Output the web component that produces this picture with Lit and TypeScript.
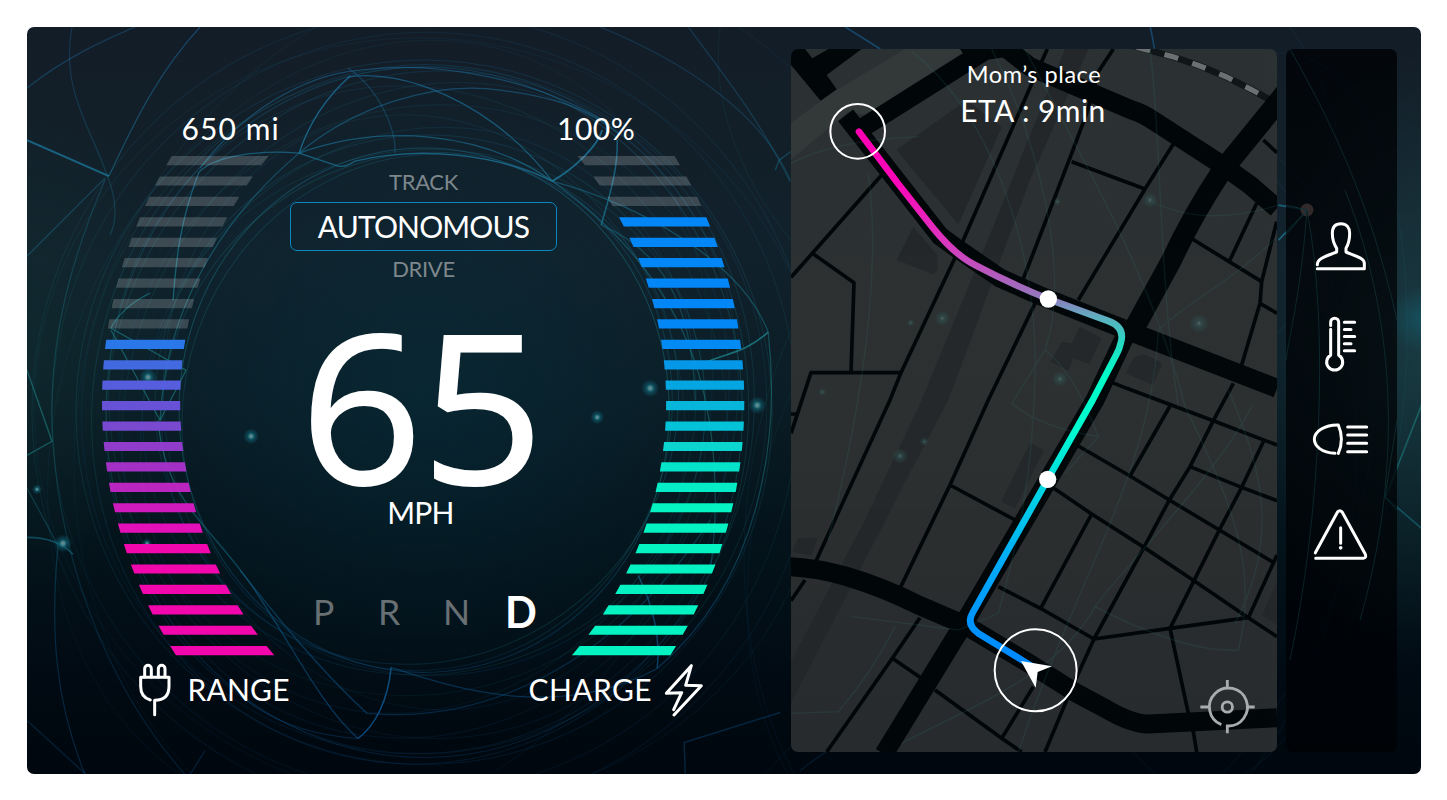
import { LitElement, html, svg, css } from "lit";
import { customElement, property } from "lit/decorators.js";

const TRACK = "rgba(255,255,255,.19)";
const PINK = "#f907b2";
const BLUE = "#0389fd";
const MINT = "#05fac8";

const RANGE_COLORS = [
  ...Array(9).fill(TRACK),
  "#2b7af0", "#446be6", "#5960e4", "#6a53dc", "#7d4ad6", "#953dd0", "#a832cb", "#c026c4", "#d61bc2", "#ea0fbd",
  ...Array(6).fill(PINK),
];
const CHARGE_COLORS = [
  ...Array(3).fill(TRACK),
  ...Array(6).fill(BLUE),
  "#038efa", "#059cf0", "#04aae8", "#07bbe0", "#04c8de", "#0bdcd4", "#05ead0", "#05f4cb",
  ...Array(8).fill(MINT),
];

/* Horizontal offset of a circle's left edge at a vertical distance from its centre. */
const bow = (r: number, dy: number) => r - Math.sqrt(r * r - dy * dy);

@customElement("arc-gauge")
class ArcGauge extends LitElement {
  @property({ attribute: false }) colors: string[] = [];
  @property({ type: Boolean }) mirrored = false;

  static styles = css`
    :host { display: block; height: 500px; }
    svg { display: block; }
  `;

  render() {
    const pitch = 20.42;
    const bars = this.colors.map((fill, i) => {
      const top = i * pitch;
      const bottom = top + 9.2;
      const a = top - 246.3;
      const b = bottom - 246.3;
      const pts = [
        [bow(470, a), top],
        [78.2 + bow(387, a), top],
        [78.2 + bow(387, b), bottom],
        [bow(470, b), bottom],
      ].map(([x, y]) => `${(this.mirrored ? 185.3 - x : x).toFixed(2)},${y.toFixed(2)}`);
      return svg`<polygon points=${pts.join(" ")} fill=${fill} fill-opacity=".97"/>`;
    });
    return html`<svg width="186" height="500" viewBox="0 0 186 500">${bars}</svg>`;
  }
}

@customElement("energy-web")
class EnergyWeb extends LitElement {
  static styles = css`
    :host { display: block; }
    svg { display: block; width: 100%; height: 100%; }
  `;

  render() {
    const rings = [
      [424, 410, 245, 262, 0, 0.4], [427, 412, 243, 260, 20, 0.25], [420, 408, 250, 264, 50, 0.26],
      [424, 412, 262, 282, 80, 0.16], [430, 405, 275, 270, 10, 0.2], [418, 420, 270, 300, 30, 0.14],
      [424, 400, 290, 310, 60, 0.13], [424, 412, 318, 345, 0, 0.3], [430, 412, 322, 343, 18, 0.2],
      [420, 414, 328, 350, 8, 0.22], [424, 410, 340, 346, 40, 0.14], [424, 412, 348, 352, 0, 0.2],
      [430, 410, 300, 335, 28, 0.15], [418, 412, 305, 330, -24, 0.15], [424, 412, 372, 380, 10, 0.13],
      [424, 412, 392, 400, 0, 0.15], [430, 420, 398, 380, 20, 0.1], [424, 412, 258, 300, -15, 0.13],
      [380, 430, 320, 400, 22, 0.1], [500, 430, 420, 470, 20, 0.09], [1050, 500, 300, 420, 12, 0.12],
      [1060, 500, 290, 410, 24, 0.1], [1240, 420, 160, 370, 8, 0.1], [1030, 120, 330, 250, 30, 0.11],
    ];
    const strands: [string, number, number][] = [
      ["M27,140 L109,176", 0.75, 2],
      ["M109,176 C135,120 160,70 200,27", 0.5, 1.2],
      ["M27,88 C65,58 100,42 135,27", 0.4, 1.2],
      ["M27,256 L105,178", 0.4, 1.2],
      ["M72,27 C60,90 92,130 107,175 C117,200 117,220 110,235", 0.3, 1.2],
      ["M105,180 C75,250 50,330 52,420 C56,560 110,690 185,774", 0.32, 1.2],
      ["M299,153 Q314,108 350,76", 0.8, 1.3],
      ["M348,77 C400,68 490,100 552,181", 0.65, 1.3],
      ["M299,153 C350,110 430,80 500,90 C560,98 590,110 620,135", 0.5, 1.3],
      ["M299,153 C260,150 215,155 199,172 C180,220 176,260 173,300", 0.65, 1.3],
      ["M299,153 L338,166 C345,167 350,164 355,161 C420,145 500,155 552,181", 0.7, 1.3],
      ["M299,153 C380,124 480,130 552,181", 0.6, 1.2],
      ["M299,153 C220,220 165,310 160,420", 0.5, 1.2],
      ["M200,168 C240,115 300,75 360,70 C440,60 540,80 610,125", 0.5, 1.2],
      ["M348,68 C380,90 396,130 395,153", 0.35, 1.3],
      ["M552,181 C575,168 598,145 602,130", 0.8, 1.8],
      ["M617,140 C618,170 608,200 601,225", 0.7, 1.5],
      ["M552,181 C640,205 740,260 768,332", 0.5, 1.2],
      ["M552,181 C620,230 670,290 694,360 C715,420 720,500 710,570", 0.5, 1.2],
      ["M768,332 C745,352 730,352 708,361", 0.8, 1.6],
      ["M768,332 C780,440 760,580 657,668", 0.5, 1.2],
      ["M601,225 C660,250 692,300 695,400", 0.4, 1.2],
      ["M638,575 C655,610 660,640 657,668", 0.7, 1.4],
      ["M391,667 C388,700 375,725 358,738", 0.9, 1.5],
      ["M358,738 C320,705 290,640 248,580 C205,520 165,500 158,420", 0.6, 1.3],
      ["M367,713 C320,670 280,620 240,570", 0.55, 1.3],
      ["M391,667 C460,690 560,720 657,668", 0.5, 1.2],
      ["M358,738 C310,735 270,720 240,695", 0.4, 1.2],
      ["M367,713 C480,723 610,670 710,520", 0.4, 1.2],
      ["M150,293 C130,302 115,318 111,328 L186,370 L160,420 L111,330", 0.65, 1.2],
      ["M27,455 L52,441 L27,370", 0.6, 1.4],
      ["M27,537 C40,537 60,540 73,554", 0.6, 1.6],
      ["M27,488 L58,545 C50,630 55,700 85,774", 0.4, 1.2],
      ["M27,720 L86,774 M190,774 L205,750", 0.35, 1.2],
      ["M800,770 C900,690 940,730 1060,700", 0.25, 1.2],
      ["M685,774 L684,742 L780,712", 0.4, 1.4],
      ["M775,170 L779,160 C830,120 890,110 960,100", 0.4, 1.4],
      ["M600,27 C680,60 760,110 790,180", 0.3, 1.2],
      ["M688,27 C720,70 760,120 790,182", 0.35, 1.2],
      ["M845,27 L880,49 M1150,27 L1160,80", 0.5, 1.6],
      ["M1278,205 L1307,210 L1278,240", 0.7, 1.6],
      ["M1421,405 L1385,497 L1421,528", 0.6, 1.6],
    ];
    return html`
      <svg viewBox="27 27 1394 747" preserveAspectRatio="none">
        <defs>
          <linearGradient id="w" x1="0" y1="27" x2="0" y2="774" gradientUnits="userSpaceOnUse">
            <stop offset="0" stop-color="#1b6ca6"/>
            <stop offset=".35" stop-color="#1b8292"/>
            <stop offset=".55" stop-color="#1c7f7c"/>
            <stop offset=".8" stop-color="#0c5686"/>
            <stop offset="1" stop-color="#0a4e8a"/>
          </linearGradient>
          <radialGradient id="n">
            <stop offset="0" stop-color="#7f8c90"/>
            <stop offset=".22" stop-color="#3a8087"/>
            <stop offset=".45" stop-color="#127084" stop-opacity=".5"/>
            <stop offset="1" stop-color="#127084" stop-opacity="0"/>
          </radialGradient>
        </defs>
        <g fill="none" stroke="url(#w)">
          ${rings.map(([x, y, rx, ry, r, o]) => svg`<ellipse cx=${x} cy=${y} rx=${rx} ry=${ry} transform=${`rotate(${r} ${x} ${y})`} opacity=${o}/>`)}
          ${strands.map(([d, o, w]) => svg`<path d=${d} opacity=${o} stroke-width=${w}/>`)}
        </g>
        ${[[650, 388, 9], [757, 405, 9], [251, 436, 8], [597, 417, 7], [63, 543, 9], [37, 489, 5], [147, 543, 5], [148, 377, 9]]
          .map(([x, y, r]) => svg`<circle cx=${x} cy=${y} r=${r} fill="url(#n)"/>`)}
      </svg>`;
  }
}

@customElement("route-map")
class RouteMap extends LitElement {
  static styles = css`
    :host { display: grid; border-radius: 7px; overflow: hidden; font-family: Lato, sans-serif; color: #fff; }
    svg { grid-area: 1 / 1; display: block; width: 486px; height: 703px; }
    .caption {
      grid-area: 1 / 1; z-index: 1; justify-self: center; align-self: start;
      display: flex; flex-direction: column; align-items: center;
      padding-top: 11px; text-align: center; white-space: pre;
    }
    .place { font-size: 23.5px; line-height: 28px; letter-spacing: .55px; }
    .eta { font-size: 30px; line-height: 36px; margin-top: 4px; letter-spacing: .45px; padding-right: 2px; }
  `;

  render() {
    return html`
      <svg viewBox="18 27 1458 2109" preserveAspectRatio="none">
        <defs>
          <linearGradient id="land" x1="0" y1="0" x2="0" y2="1">
            <stop offset="0" stop-color="#2c3134"/><stop offset=".5" stop-color="#2d3030"/><stop offset="1" stop-color="#282c2f"/>
          </linearGradient>
          <linearGradient id="route" x1="0" y1="275" x2="0" y2="1870" gradientUnits="userSpaceOnUse">
            <stop offset="0" stop-color="#ff00b4"/>
            <stop offset=".1" stop-color="#fb08b8"/>
            <stop offset=".2" stop-color="#df32be"/>
            <stop offset=".26" stop-color="#bb55bd"/>
            <stop offset=".31" stop-color="#9377bc"/>
            <stop offset=".35" stop-color="#5db0c0"/>
            <stop offset=".4" stop-color="#24dcc2"/>
            <stop offset=".46" stop-color="#00fcc8"/>
            <stop offset=".56" stop-color="#00fad0"/>
            <stop offset=".68" stop-color="#00d2e4"/>
            <stop offset=".8" stop-color="#00aef6"/>
            <stop offset=".92" stop-color="#0094ff"/>
            <stop offset="1" stop-color="#0088ff"/>
          </linearGradient>
          <radialGradient id="glow">
            <stop offset="0" stop-color="#566867"/><stop offset=".25" stop-color="#355655" stop-opacity=".6"/>
            <stop offset="1" stop-color="#255052" stop-opacity="0"/>
          </radialGradient>
        </defs>
        <rect x="18" y="27" width="1458" height="2109" fill="url(#land)"/>
        <polygon fill="#34383a" points="18,250 110,180 155,150 360,27 550,27 240,225 190,215 130,265 18,360"/>
        <g fill="#24282a">
          <polygon points="840,27 910,27 735,420 490,1080 395,1260 18,1990 18,1865 240,1440 410,1080 600,620"/>
          <polygon points="335,330 545,180 650,262 520,553"/>
          <polygon points="385,560 457,645 457,690 445,703 335,660"/>
          <polygon points="885,860 950,895 913,972 865,955 850,992 797,965 830,905 860,910"/>
          <path d="M1023,1000 L1040,962 Q1060,938 1085,945 L1125,965 L1130,975 L1103,1035 Z"/>
          <polygon points="735,1210 777,1230 690,1405 648,1385"/>
          <polygon points="38,1495 98,1493 80,1547 22,1535"/>
          <polygon points="1476,1625 1432,1725 1476,1755"/>
        </g>
        <path d="M1040,16 L1075,26 L1160,49 L1243,77 L1323,110 L1402,150 L1476,192" fill="none" stroke="#111719" stroke-width="20"/>
        <path d="M1054,21 L1075,27 L1160,49 L1243,77 L1323,110 L1402,150 L1476,192" fill="none" stroke="#6c7072" stroke-width="16" stroke-dasharray="43 44.3"/>
        <g fill="none" stroke="#02070a" stroke-linejoin="round">
          <g stroke-width="11">
            <path d="M290,405 L82,640 L18,712 M82,640 L207,728 L198,998 M18,1180 L78,998 H348 M18,1122 H35"/>
            <path d="M787,27 L745,120 L535,600 L348,998 L315,1080 L92,1565"/>
            <path d="M985,27 L940,95 L905,220 L860,340 L735,665 L715,715 M750,790 L610,1080 L495,1335 L345,1645 M495,1335 L690,1440"/>
            <path d="M860,365 L1080,447 M1165,312 L1080,447 L880,780 M1435,300 L1476,338 M1415,490 L1335,660 M1222,597 L1430,725"/>
            <path d="M1475,545 L1430,725 L1425,790 L1370,975 M1425,790 L1476,820 M975,1025 L1025,1045 L1285,1142 L1476,1215"/>
            <path d="M1345,1030 L1285,1142 L1215,1280 L1153,1380 L1077,1522 L927,1797 L860,1945 L780,2136 M1155,1098 L1035,1308"/>
            <path d="M875,1215 L1035,1308 L1153,1380 L1303,1470 L1465,1567 M1215,1280 L1370,1342 L1476,1382"/>
            <path d="M1435,1205 L1370,1342 L1303,1470 L1227,1622 L1155,1765 L1210,2020 L1225,2075 L1235,2136"/>
            <path d="M800,1340 L920,1422 L1077,1522 L1227,1622 L1390,1733 L1476,1790 M920,1422 L767,1705"/>
            <path d="M640,1640 L770,1707 L927,1797 L1155,1765 L1390,1733 L1476,1545 M60,1620 L18,1682"/>
            <path d="M405,1733 L322,1855 L125,2136 M322,1855 L405,1912 M450,1950 L650,2095 L710,2136 M745,1940 L650,2095"/>
          </g>
          <g stroke-width="57">
            <path d="M235,262 L600,32 L660,22 L735,80 L1040,210 Q1070,218 1110,245 L1311,375 L1395,435 L1476,505"/>
            <path d="M1500,160 L1311,392 Q1220,530 1160,660 L1045,870" stroke-width="62"/>
            <path d="M182,226 L465,588 L520,628 L645,714 L760,765 L1050,880 L1476,1045"/>
            <path d="M1022,885 L930,1080 L540,1745 L297,2142"/>
            <path d="M15,1580 Q100,1585 180,1608 Q290,1640 400,1695 L540,1755 L740,1875 L870,1957 L960,2005 Q1040,2052 1090,2052 L1476,2033"/>
          </g>
        </g>
        <path fill="#02070a" d="M18,27 H60 L82,55 L130,27 H230 L125,105 L155,148 L107,182 L18,75 Z M525,27 H705 L740,50 L618,52 L560,80 Z"/>
        <g fill="none" stroke="#2e7d7d" stroke-width="4" opacity=".16">
          <path d="M380,35 C600,200 760,600 750,1000 C745,1300 700,1500 640,1720 L520,1770 L200,1730"/>
          <path d="M720,27 C860,300 1100,700 1200,1100 C1350,1400 1420,1600 1360,1830 Q1200,1840 930,1700"/>
          <path d="M1090,480 Q1250,565 1476,497 M1476,590 C1350,720 1200,790 1120,870 M1095,27 C1130,300 1120,700 1180,1100"/>
          <path d="M18,370 Q150,300 400,290 M250,400 C290,700 230,1100 130,1500 M620,27 C760,300 860,700 780,930 L680,1090 Q760,1160 940,1190 L840,1300"/>
          <path d="M18,2020 L160,2015 Q260,1900 330,1760 M1400,1100 C1300,1300 1000,1600 930,1700 C820,1900 600,1980 350,2110 M780,930 Q870,1000 940,1190"/>
          <path d="M1330,1050 C1440,1300 1480,1500 1350,1750 M1120,870 C1100,1300 880,1600 700,2136"/>
        </g>
        ${[[472, 835, 24], [345, 1248, 24], [1095, 480, 24], [1242, 850, 30], [825, 1017, 24], [817, 485, 12], [377, 848, 12], [112, 1056, 12], [418, 1205, 14]]
          .map(([x, y, r]) => svg`<circle cx=${x} cy=${y} r=${r} fill="url(#glow)"/>`)}
        <path d="M222,275 L340,432 L445,565 Q510,645 570,675 Q670,728 790,777 L970,843 Q1022,862 1007,910 Q1003,928 995,942 L923,1080 L788,1318 L563,1718 Q542,1752 580,1780 L740,1878"
          fill="none" stroke="url(#route)" stroke-width="20" stroke-linecap="round" stroke-linejoin="round"/>
        <g fill="#fff">
          <circle cx="790" cy="777" r="26"/><circle cx="788" cy="1318" r="26"/>
          <polygon points="708,1863 801,1879 758,1896 752,1943"/>
        </g>
        <g fill="none" stroke="#fff" stroke-width="6">
          <circle cx="218" cy="274" r="82"/><circle cx="752" cy="1891" r="123"/>
        </g>
        <g fill="none" stroke="#a9abac" stroke-width="8.5">
          <circle cx="1327" cy="2001" r="15.5"/>
          <path d="M1309,2054 A57 57 0 1 1 1327,2058 V2080 M1327,1920 V1944 M1246,2001 H1270 M1384,2001 H1409"/>
        </g>
      </svg>
      <div class="caption"><div class="place">Mom’s place</div><div class="eta">ETA : 9min</div></div>
    `;
  }
}

@customElement("app-root")
class AppRoot extends LitElement {
  static styles = css`
    :host {
      display: block; box-sizing: border-box; width: 1447px; height: 800px; padding: 26.5px 26px 26px 26.5px;
      background: #fff; color: #fff; font-family: Lato, "Open Sans", sans-serif; line-height: 1; overflow: hidden;
    }
    * { box-sizing: border-box; }
    .frame {
      position: relative; display: flex; width: 1394.5px; height: 747.5px; border-radius: 7px; overflow: hidden;
      background:
        radial-gradient(circle 34px at 1395px 292px, rgba(20,110,130,.45), transparent),
        radial-gradient(ellipse 330px 330px at 397px 370px, rgba(6,48,62,.5), transparent),
        radial-gradient(ellipse 170px 300px at 1394px 330px, rgba(35,80,85,.55), transparent),
        radial-gradient(ellipse 160px 250px at 0 320px, rgba(20,60,60,.3), transparent),
        linear-gradient(#131d27, #11212b 30%, #0b1d26 48%, #04131b 68%, #010a12 88%, #00070e);
    }
    .web { position: absolute; inset: 0; }
    .cluster {
      position: relative; display: grid; grid-template-columns: 186px 271px 186px;
      width: 764.5px; padding: 0 0 0 75.5px; flex: none;
    }
    .side { display: flex; flex-direction: column; padding-top: 85.5px; }
    .reading { height: 44px; line-height: 32px; font-size: 30px; white-space: nowrap; }
    .reading.left { padding-left: 79.5px; letter-spacing: 1.1px; }
    .reading.right { padding-left: 1px; letter-spacing: .5px; margin-left: -3px; }
    .legend { display: flex; align-items: center; height: 54px; margin-top: 7px; font-size: 30px; white-space: nowrap; }
    .legend.left { margin-left: 34.5px; gap: 15px; letter-spacing: .2px; }
    .legend.right { justify-content: flex-end; gap: 13px; margin-right: 42.5px; letter-spacing: .4px; }
    .legend.right span { margin-right: -1.5px; }
    .legend span { line-height: 34px; margin-top: -2px; }
    .legend svg { flex: none; }
    .center { display: flex; flex-direction: column; align-items: center; padding-top: 144px; }
    .mode { font-size: 22px; line-height: 22px; letter-spacing: -.35px; color: #7e878c; }
    .selected {
      width: 267px; height: 49px; margin: 9px 0 7px; border: 1px solid #0b87c4; border-radius: 7px;
      display: grid; place-items: center; font-size: 30px; line-height: 47px; letter-spacing: -.85px;
    }
    .speed {
      font-family: "Open Sans", sans-serif; font-size: 207px; line-height: 184px; height: 184px;
      margin-top: 32.5px; letter-spacing: -1px; white-space: nowrap; transform: translateX(-2px) scaleX(1.035);
      -webkit-text-stroke: 2px #fff;
    }
    .unit { font-size: 30px; line-height: 30px; margin-top: 1px; letter-spacing: -.8px; transform: translateX(-3px); }
    .gears {
      display: grid; grid-template-columns: 65px 65px 62px auto; align-items: baseline; width: 221px;
      margin-top: 58.5px; font-size: 35.5px; line-height: 44px; color: #687074;
    }
    .active { font-size: 44px; font-weight: 700; color: #fff; transform: translateY(2.5px) scaleX(.95); transform-origin: 0 50%; }
    .map { position: relative; width: 486px; height: 703px; margin-top: 22.5px; flex: none; }
    .controls {
      position: relative; display: flex; flex-direction: column; align-items: center; gap: 32.4px; flex: none;
      width: 111.5px; height: 703px; margin: 22.5px 0 0 8.5px; padding-top: 165px;
      border-radius: 7px; background: rgba(0,2,4,.74); overflow: hidden;
    }
    .spark { position: absolute; left: 0; top: 0; }
    .icon { display: block; position: relative; width: 64px; height: 64px; }
    .line { fill: none; stroke: #fff; stroke-width: 9; stroke-linejoin: round; stroke-linecap: round; }
  `;

  private icon(box: string, shape: unknown) {
    return html`<svg class="icon line" viewBox=${box}>${shape}</svg>`;
  }

  render() {
    return html`
      <main class="frame">
        <energy-web class="web"></energy-web>

        <section class="cluster">
          <div class="side">
            <div class="reading left">650 mi</div>
            <arc-gauge .colors=${RANGE_COLORS}></arc-gauge>
            <div class="legend left">
              <svg class="line" width="36" height="54" viewBox="350 790 108 162">
                <path d="M373,832 V807 a10,10 0 0 1 20 0 V832 M414,832 V807 a10,10 0 0 1 20 0 V832"/>
                <path d="M390,901 C370,896 361,880 361,860 V833 H446 V860 C446,888 430,902 403,902 V945"/>
              </svg>
              <span>RANGE</span>
            </div>
          </div>

          <div class="center">
            <div class="mode">TRACK</div>
            <div class="selected">AUTONOMOUS</div>
            <div class="mode">DRIVE</div>
            <div class="speed">65</div>
            <div class="unit">MPH</div>
            <div class="gears"><span>P</span><span>R</span><span>N</span><span class="active">D</span></div>
          </div>

          <div class="side">
            <div class="reading right">100%</div>
            <arc-gauge .colors=${CHARGE_COLORS} mirrored></arc-gauge>
            <div class="legend right">
              <span>CHARGE</span>
              <svg class="line" width="39" height="54" viewBox="792 790 117 162">
                <path d="M821,930 L845,879 L799,881 L874,798 L857,857 L904,858 L822,946"/>
              </svg>
            </div>
          </div>
        </section>

        <route-map class="map"></route-map>

        <nav class="controls">
          <svg class="spark" width="112" height="703" viewBox="1286 49 112 703" fill="none" stroke="#1c5a5c" opacity=".35">
            <circle cx="1307" cy="210" r="6.5" fill="#8a6662" stroke="none"/>
            <path d="M1286,205 L1307,210 L1286,235 M1307,210 C1300,300 1290,330 1286,360 M1307,210 C1330,330 1320,520 1290,660 M1345,190 C1400,330 1400,480 1360,620 M1397,420 L1385,497 L1397,510 M1290,49 C1330,120 1370,200 1397,320"/>
          </svg>
          ${this.icon("102 72 192 192", svg`<path d="M127,224 C127,208 140,203 185,186 V175 C175,160 172,150 172,130 C172,110 182,101 198,101 C214,101 224,112 224,130 C224,150 222,160 213,175 V186 C255,203 268,206 268,220 V236 H127"/>`)}
          ${this.icon("102 361.5 192 192", svg`<path d="M167,408 V398 A12 12 0 0 1 191,398 V497 A24 24 0 1 1 167,497 V419 M208,398 H239 M208,420 H228 M208,441 H239 M208,463 H228 M208,484 H239"/>`)}
          ${this.icon("102 51 192 192", svg`<path d="M180,190 C140,188 118,168 118,148 C118,124 150,104 190,105 C203,135 201,165 190,190 M218,111 H275 M218,135 H275 M218,160 H275 M218,185 H275"/>`)}
          ${this.icon("102 340.5 192 192", svg`<path d="M121,490 L188,367 Q194,360 201,367 L271,494 Q275,506 265,506 H122 M197,415 V461"/><circle cx="197" cy="475" r="5.5" fill="#fff" stroke="none"/>`)}
        </nav>
      </main>
    `;
  }
}
